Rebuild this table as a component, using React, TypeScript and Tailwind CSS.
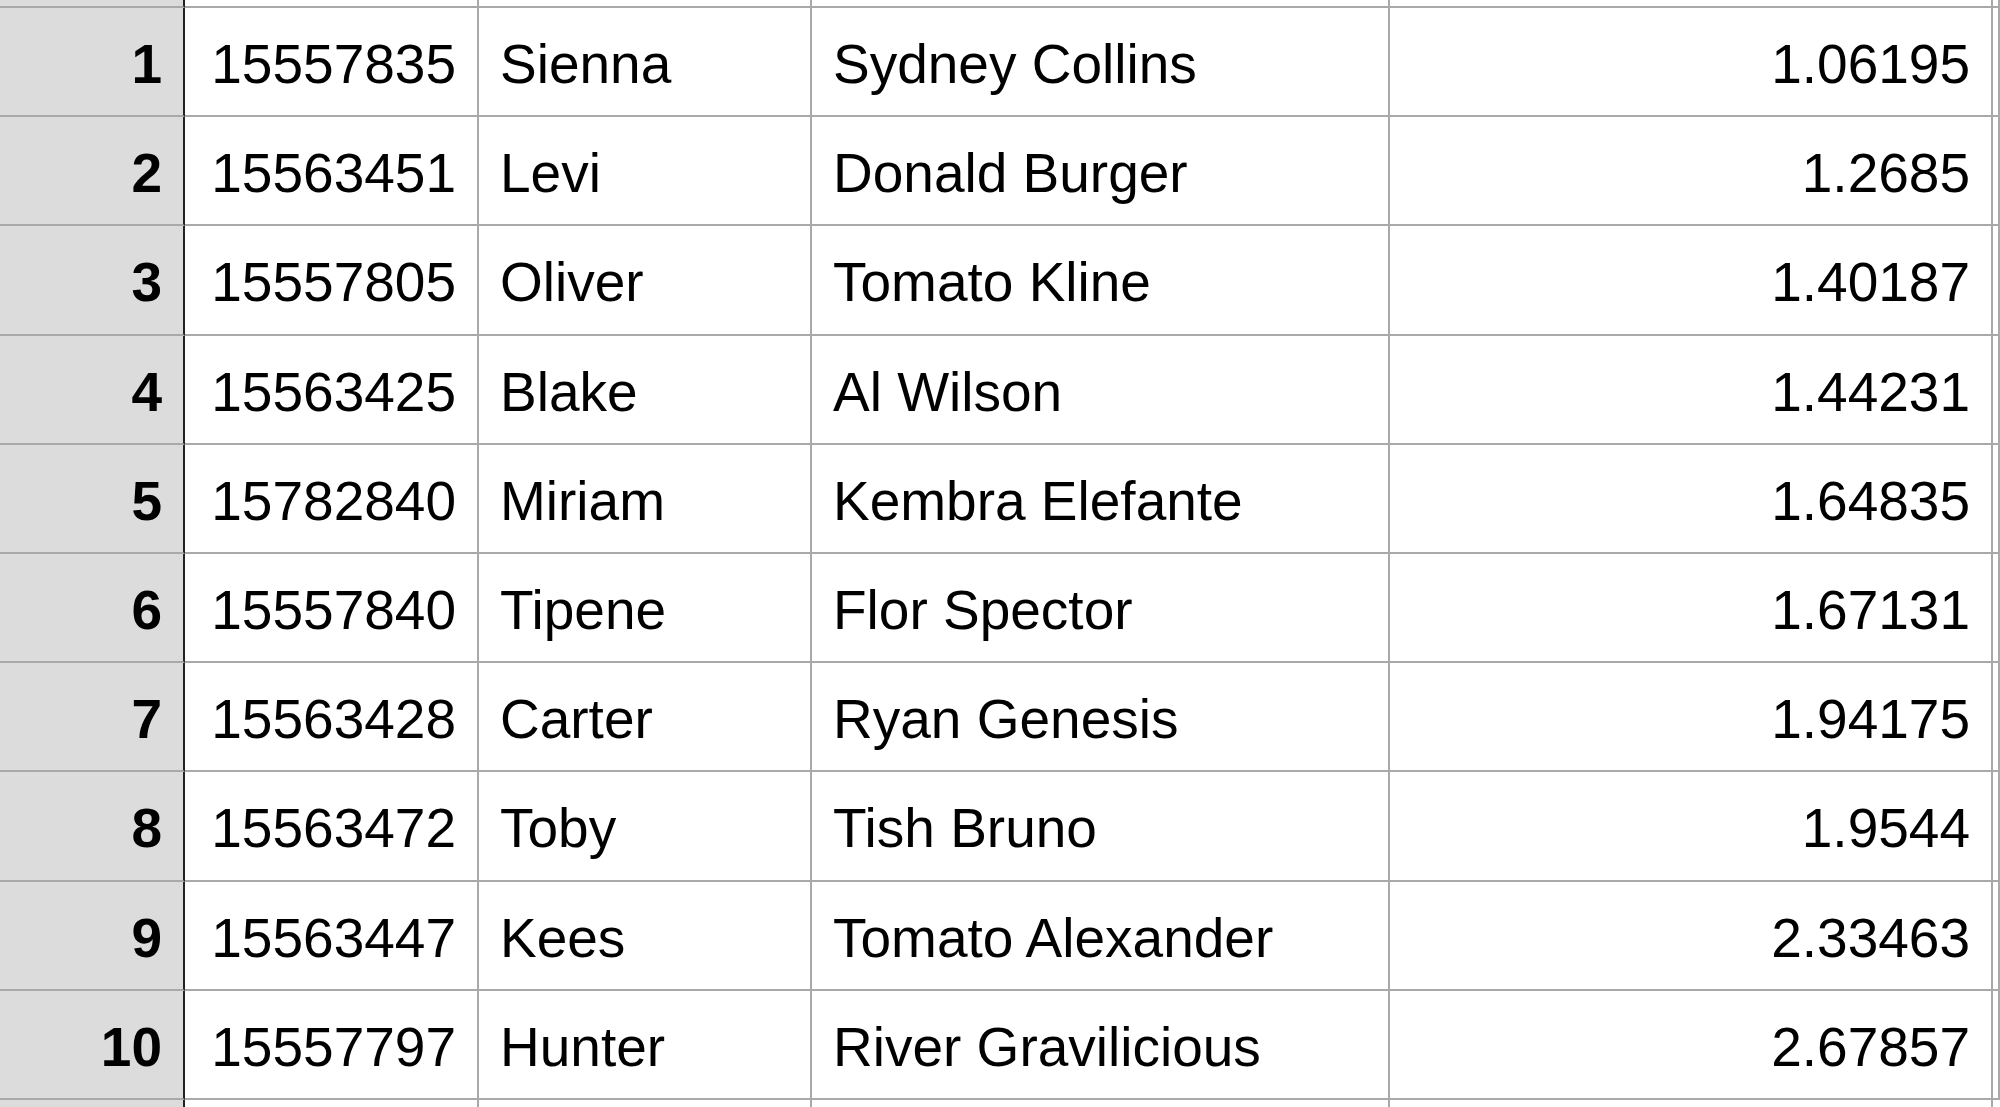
import React from "react";

const rows: { n: number; id: string; first: string; name: string; val: string; h: string }[] = [
  { n: 1, id: "15557835", first: "Sienna", name: "Sydney Collins", val: "1.06195", h: "h-[109px]" },
  { n: 2, id: "15563451", first: "Levi", name: "Donald Burger", val: "1.2685", h: "h-[109px]" },
  { n: 3, id: "15557805", first: "Oliver", name: "Tomato Kline", val: "1.40187", h: "h-[110px]" },
  { n: 4, id: "15563425", first: "Blake", name: "Al Wilson", val: "1.44231", h: "h-[109px]" },
  { n: 5, id: "15782840", first: "Miriam", name: "Kembra Elefante", val: "1.64835", h: "h-[109px]" },
  { n: 6, id: "15557840", first: "Tipene", name: "Flor Spector", val: "1.67131", h: "h-[109px]" },
  { n: 7, id: "15563428", first: "Carter", name: "Ryan Genesis", val: "1.94175", h: "h-[109px]" },
  { n: 8, id: "15563472", first: "Toby", name: "Tish Bruno", val: "1.9544", h: "h-[110px]" },
  { n: 9, id: "15563447", first: "Kees", name: "Tomato Alexander", val: "2.33463", h: "h-[109px]" },
  { n: 10, id: "15557797", first: "Hunter", name: "River Gravilicious", val: "2.67857", h: "h-[109px]" },
];

const grid = "grid grid-cols-[185px_294px_333px_578px_603px_1fr]";
const hdr = "bg-[#dcdcdc] border-r-2 border-r-[#222222] border-b-2 border-b-[#a9a9a9]";
const cell = "bg-white border-r-2 border-b-2 border-[#a9a9a9]";

export default function App() {
  return (
    <div
      className="w-[2000px] h-[1107px] overflow-hidden bg-white text-black text-[55px] leading-none"
      style={{ fontFamily: '"Liberation Sans", Arial, sans-serif' }}
    >
      <div className={`${grid} h-[8px]`}>
        <div className={hdr} />
        <div className={cell} />
        <div className={cell} />
        <div className={cell} />
        <div className={cell} />
        <div className={cell} />
      </div>
      {rows.map((r) => (
        <div key={r.n} className={`${grid} ${r.h}`}>
          <div className={`${hdr} flex items-center justify-end pr-[21px] pt-[5px] font-bold`}>{r.n}</div>
          <div className={`${cell} flex items-center justify-end pr-[21px] pt-[5px]`}>{r.id}</div>
          <div className={`${cell} flex items-center pl-[21px] pt-[5px]`}>{r.first}</div>
          <div className={`${cell} flex items-center pl-[21px] pt-[5px]`}>{r.name}</div>
          <div className={`${cell} flex items-center justify-end pr-[21px] pt-[5px]`}>{r.val}</div>
          <div className={cell} />
        </div>
      ))}
      <div className={`${grid} h-[20px]`}>
        <div className="bg-[#dcdcdc] border-r-2 border-r-[#222222]" />
        <div className="bg-white border-r-2 border-[#a9a9a9]" />
        <div className="bg-white border-r-2 border-[#a9a9a9]" />
        <div className="bg-white border-r-2 border-[#a9a9a9]" />
        <div className="bg-white border-r-2 border-[#a9a9a9]" />
        <div className="bg-white" />
      </div>
    </div>
  );
}
